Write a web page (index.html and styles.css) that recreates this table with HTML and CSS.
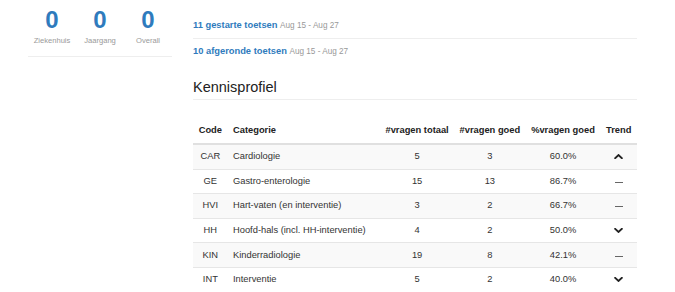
FILE: index.html
```html
<!DOCTYPE html>
<html lang="nl">
<head>
<meta charset="utf-8">
<title>Kennisprofiel</title>
<link rel="stylesheet" href="styles.css">
</head>
<body>
<div class="page">
  <aside class="side">
    <div class="stats">
      <div class="stat"><div class="stat-num">0</div><div class="stat-label">Ziekenhuis</div></div>
      <div class="stat"><div class="stat-num">0</div><div class="stat-label">Jaargang</div></div>
      <div class="stat"><div class="stat-num">0</div><div class="stat-label">Overall</div></div>
    </div>
  </aside>
  <main class="main">
    <ul class="tests">
      <li class="test"><a class="test-link">11 gestarte toetsen</a> <span class="test-date">Aug 15 - Aug 27</span></li>
      <li class="test"><a class="test-link">10 afgeronde toetsen</a> <span class="test-date">Aug 15 - Aug 27</span></li>
    </ul>
    <h3 class="section-title">Kennisprofiel</h3>
    <table class="profile">
      <thead>
        <tr>
          <th class="c-code">Code</th>
          <th class="c-cat">Categorie</th>
          <th class="c-tot">#vragen totaal</th>
          <th class="c-good">#vragen goed</th>
          <th class="c-pct">%vragen goed</th>
          <th class="c-trend">Trend</th>
        </tr>
      </thead>
      <tbody>
        <tr>
          <td class="c-code">CAR</td><td class="c-cat">Cardiologie</td><td class="c-tot">5</td><td class="c-good">3</td><td class="c-pct">60.0%</td>
          <td class="c-trend"><svg class="chev" width="9" height="5" viewBox="0 0 9 5"><polyline points="1.2,4.2 4.5,1 7.8,4.2" /></svg></td>
        </tr>
        <tr>
          <td class="c-code">GE</td><td class="c-cat">Gastro-enterologie</td><td class="c-tot">15</td><td class="c-good">13</td><td class="c-pct">86.7%</td>
          <td class="c-trend"><span class="dash"></span></td>
        </tr>
        <tr>
          <td class="c-code">HVI</td><td class="c-cat">Hart-vaten (en interventie)</td><td class="c-tot">3</td><td class="c-good">2</td><td class="c-pct">66.7%</td>
          <td class="c-trend"><span class="dash"></span></td>
        </tr>
        <tr>
          <td class="c-code">HH</td><td class="c-cat">Hoofd-hals (incl. HH-interventie)</td><td class="c-tot">4</td><td class="c-good">2</td><td class="c-pct">50.0%</td>
          <td class="c-trend"><svg class="chev" width="9" height="5" viewBox="0 0 9 5"><polyline points="1.2,0.8 4.5,4 7.8,0.8" /></svg></td>
        </tr>
        <tr>
          <td class="c-code">KIN</td><td class="c-cat">Kinderradiologie</td><td class="c-tot">19</td><td class="c-good">8</td><td class="c-pct">42.1%</td>
          <td class="c-trend"><span class="dash"></span></td>
        </tr>
        <tr>
          <td class="c-code">INT</td><td class="c-cat">Interventie</td><td class="c-tot">5</td><td class="c-good">2</td><td class="c-pct">40.0%</td>
          <td class="c-trend"><svg class="chev" width="9" height="5" viewBox="0 0 9 5"><polyline points="1.2,0.8 4.5,4 7.8,0.8" /></svg></td>
        </tr>
      </tbody>
    </table>
  </main>
</div>
</body>
</html>
```

FILE: styles.css
```css
html, body {
  margin: 0;
  padding: 0;
  background: #fff;
}

body {
  font-family: "Liberation Sans", Arial, Helvetica, sans-serif;
  font-size: 9.33px;
  line-height: 13.33px;
  color: #333;
}

.page {
  display: flex;
  align-items: flex-start;
  padding-left: 28px;
  gap: 21px;
}

.side {
  width: 144px;
  flex: none;
}

.stats {
  display: flex;
  padding-top: 7.4px;
  padding-bottom: 9px;
  border-bottom: 1px solid #eee;
}

.stat {
  flex: 1;
  text-align: center;
}

.stat-num {
  font-size: 24px;
  line-height: 26.4px;
  font-weight: bold;
  color: #2f7bbd;
}

.stat-label {
  margin-top: 2.5px;
  font-size: 7.6px;
  line-height: 10.5px;
  color: #9a9a9a;
}

.main {
  width: 444px;
  flex: none;
}

.tests {
  list-style: none;
  margin: 12px 0 0;
  padding: 0;
}

.test {
  padding: 6.5px 0 6px;
  border-bottom: 1px solid #eee;
}

.test:last-child {
  border-bottom: none;
}

.test-link {
  color: #2f7bbd;
  font-weight: bold;
}

.test-date {
  font-size: 8.2px;
  color: #999;
}

.section-title {
  margin: 14.2px 0 0;
  padding-bottom: 4.4px;
  font-size: 14.5px;
  line-height: 16px;
  font-weight: normal;
  color: #222;
  border-bottom: 1px solid #eee;
}

.profile {
  width: 100%;
  margin-top: 19px;
  border-collapse: collapse;
  border-spacing: 0;
}

.profile th,
.profile td {
  padding: 5.17px 5.33px;
  line-height: 13.33px;
  white-space: nowrap;
  text-align: center;
  vertical-align: middle;
}

.profile th {
  font-weight: bold;
  color: #222;
  border-bottom: 2px solid #e0e0e0;
}

.profile td {
  border-top: 1px solid #e6e6e6;
}

.profile tbody tr:first-child td {
  border-top: none;
}

.profile tbody tr:nth-child(odd) {
  background: #f9f9f9;
}

.profile .c-code { width: 24px; }
.profile .c-cat { text-align: left; }
.profile .c-tot { width: 63px; }
.profile .c-good { width: 61px; }
.profile .c-pct { width: 64px; }
.profile .c-trend { width: 26px; }

.chev {
  display: block;
  margin: 0 auto;
  fill: none;
  stroke: #222;
  stroke-width: 1.8;
  stroke-linecap: square;
}

.dash {
  display: block;
  width: 8px;
  height: 1px;
  margin: 2px auto 0;
  background: #666;
}
```
